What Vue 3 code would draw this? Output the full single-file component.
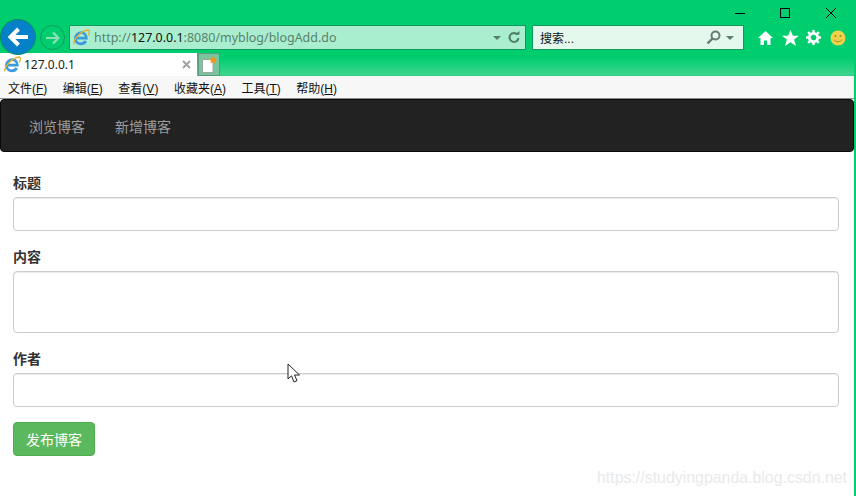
<script setup>
const menus = [
  { name: '文件', key: 'F' },
  { name: '编辑', key: 'E' },
  { name: '查看', key: 'V' },
  { name: '收藏夹', key: 'A' },
  { name: '工具', key: 'T' },
  { name: '帮助', key: 'H' }
]
const links = ['浏览博客', '新增博客']
</script>

<template>
  <div class="window">
    <header class="chrome">
      <div class="caption">
        <svg class="cap" width="45" height="12" viewBox="0 0 45 12"><path d="M0 6.500h10" stroke="#000" fill="none"/></svg>
        <svg class="cap" width="45" height="12" viewBox="0 0 45 12"><rect x="0.5" y="1.5" width="9" height="9" stroke="#000" fill="none"/></svg>
        <svg class="cap last" width="12" height="12" viewBox="0 0 12 12"><path d="M1 1l10 10M11 1L1 11" stroke="#000" fill="none"/></svg>
      </div>
      <div class="toolbar">
        <div class="back">
          <svg width="24" height="24" viewBox="0 0 24 24"><path d="M22 12H5M12.500 4l-8 8 8 8" stroke="#fff" stroke-width="4" fill="none"/></svg>
        </div>
        <div class="forward">
          <svg width="16" height="16" viewBox="0 0 16 16"><path d="M1 8h12M8 2.500l5.500 5.500L8 13.500" stroke="#8fdfb8" stroke-width="2.200" fill="none"/></svg>
        </div>
        <div class="address">
          <svg class="ie" width="17" height="17" viewBox="0 0 17 17">
            <path d="M2.500 9.200h10.800c0-3.300-2.200-5.500-5-5.500S2.500 6 2.500 9.500s2.500 5.300 5.500 5.300c2.200 0 3.800-1 4.700-2.800" fill="none" stroke="#3b9bdc" stroke-width="2.800"/>
            <path d="M1 15.500C-.5 11.500 8 1.500 15.500 1c1.500 1 .8 3.500-.3 5.500" fill="none" stroke="#e6b02e" stroke-width="1.300"/>
          </svg>
          <span class="url"><span class="dim">http://</span>127.0.0.1<span class="dim">:8080/myblog/blogAdd.do</span></span>
          <i class="caret"></i>
          <svg class="refresh" width="13" height="13" viewBox="0 0 13 13"><path d="M10.500 3.500a4.500 4.500 0 1 0 1 3.500" fill="none" stroke="#4f7f68" stroke-width="2"/><path d="M7.500 3.800h5V0z" fill="#4f7f68"/></svg>
        </div>
        <div class="search">
          <span class="search-text">搜索...</span>
          <svg width="15" height="15" viewBox="0 0 15 15"><circle cx="9.500" cy="5.500" r="4" fill="none" stroke="#6b7a72" stroke-width="2"/><path d="M6.500 8.500L1.500 13.500" stroke="#6b7a72" stroke-width="2.400"/></svg>
          <i class="caret small"></i>
        </div>
        <div class="tools">
          <svg width="17" height="16" viewBox="0 0 17 16"><path d="M8.500 1L1 8h2.500v7h3.500v-4.500h3V15h3.500V8H16z" fill="#fff"/></svg>
          <svg width="17" height="16" viewBox="0 0 18 17"><path d="M9 0l2.500 6H18l-5.200 4 2 7L9 13l-5.800 4 2-7L0 6h6.500z" fill="#fff"/></svg>
          <svg width="15" height="15" viewBox="0 0 16 16"><circle cx="8" cy="8" r="4.500" fill="none" stroke="#fff" stroke-width="3"/><path d="M8 0v3M8 13v3M0 8h3M13 8h3M2.300 2.300l2.200 2.200M11.500 11.500l2.200 2.200M13.700 2.300l-2.200 2.200M4.500 11.500l-2.200 2.200" stroke="#fff" stroke-width="2.600"/></svg>
          <svg class="smile" width="16" height="16" viewBox="0 0 16 16"><circle cx="8" cy="8" r="7.500" fill="#f2d24b"/><circle cx="5.500" cy="6" r="1" fill="#a98a1d"/><circle cx="10.500" cy="6" r="1" fill="#a98a1d"/><path d="M4 9.500c1 3 7 3 8 0" fill="none" stroke="#a98a1d"/></svg>
        </div>
      </div>
      <div class="tabs">
        <div class="tab">
          <svg width="17" height="17" viewBox="0 0 17 17">
            <path d="M2.500 9.200h10.800c0-3.300-2.200-5.500-5-5.500S2.500 6 2.500 9.500s2.500 5.300 5.500 5.300c2.200 0 3.800-1 4.700-2.800" fill="none" stroke="#3b9bdc" stroke-width="2.800"/>
            <path d="M1 15.500C-.5 11.500 8 1.500 15.500 1c1.500 1 .8 3.500-.3 5.500" fill="none" stroke="#e6b02e" stroke-width="1.300"/>
          </svg>
          <span class="tab-title">127.0.0.1</span>
          <svg width="9" height="9" viewBox="0 0 9 9"><path d="M1 1l7 7M8 1L1 8" stroke="#a3a3a3" stroke-width="2"/></svg>
        </div>
        <div class="new-tab">
          <svg width="16" height="18" viewBox="0 0 16 18"><path d="M1.500 3.500h9l1.500 1.500v11.500H1.500z" fill="#fff" stroke="#9aa8a0"/><path d="M12 0l1.300 2.200 2.700.8-2 1.800.4 2.700-2.400-1.300-2.400 1.300.4-2.700-2-1.800 2.700-.8z" fill="#f29a1e"/></svg>
        </div>
      </div>
    </header>

    <nav class="menubar">
      <span v-for="m in menus" :key="m.key" class="menu">{{ m.name }}(<u>{{ m.key }}</u>)</span>
    </nav>

    <main class="page">
      <div class="navbar">
        <a v-for="l in links" :key="l" class="nav-link">{{ l }}</a>
      </div>
      <form class="form">
        <div class="group">
          <label>标题</label>
          <input class="control" type="text" />
        </div>
        <div class="group">
          <label>内容</label>
          <textarea class="control area"></textarea>
        </div>
        <div class="group tail">
          <label>作者</label>
          <input class="control" type="text" />
        </div>
        <button class="submit" type="button">发布博客</button>
      </form>
    </main>

    <svg class="cursor" width="14" height="21" viewBox="0 0 14 21"><path d="M1 1v15l3.500-3.200L7 19l3-1.300-2.500-5.700H12.500z" fill="#fff" stroke="#222" stroke-width="1"/></svg>
    <span class="watermark">https://studyingpanda.blog.csdn.net</span>
  </div>
</template>

<style>
html, body { margin: 0; background: #fff; }
</style>

<style scoped>
.window {
  position: relative;
  width: 856px;
  height: 496px;
  box-sizing: border-box;
  border-right: 2px solid #00ce6e;
  background: #fff;
  overflow: hidden;
  font-family: "Liberation Sans", "Noto Sans CJK SC", sans-serif;
  display: flex;
  flex-direction: column;
}
.chrome {
  height: 76px;
  flex: none;
  background: linear-gradient(#00ce6e 0, #00ce6e 58px, #3fd58f 75px, #1bc97a 76px);
  box-sizing: border-box;
}
.caption {
  height: 25px;
  display: flex;
  justify-content: flex-end;
  align-items: flex-start;
  padding: 7px 17px 0 0;
  box-sizing: border-box;
}
.cap { display: block; }
.toolbar {
  height: 25px;
  display: flex;
  align-items: center;
}
.back {
  width: 36px;
  height: 36px;
  box-sizing: border-box;
  border: 1px solid #0a8a5e;
  border-radius: 50%;
  background: #0581c9;
  display: flex;
  align-items: center;
  justify-content: center;
  flex: none;
  position: relative;
  z-index: 1;
  margin-top: -1px;
}
.forward {
  width: 25px;
  height: 25px;
  box-sizing: border-box;
  border: 1px solid #0f9a5e;
  border-radius: 50%;
  margin-left: 4px;
  display: flex;
  align-items: center;
  justify-content: center;
  flex: none;
}
.address {
  width: 457px;
  height: 25px;
  box-sizing: border-box;
  margin-left: 4px;
  border: 1px solid #0f9a5e;
  background: #a9efcf;
  display: flex;
  align-items: center;
  padding: 0 5px 0 3px;
  flex: none;
}
.ie { flex: none; }
.url {
  margin-left: 4px;
  font-family: "Noto Sans", sans-serif;
  font-size: 12.450px;
  color: #111;
  flex: 1;
  white-space: nowrap;
}
.dim { color: #5b7f6d; }
.caret {
  width: 0;
  height: 0;
  border: 4px solid transparent;
  border-top: 4px solid #5b7f6d;
  border-bottom: 0;
  margin-right: 6px;
}
.refresh { flex: none; }
.search {
  width: 212px;
  height: 25px;
  box-sizing: border-box;
  margin-left: 6px;
  border: 1px solid #0f9a5e;
  background: #e4f8ee;
  display: flex;
  align-items: center;
  padding: 0 9px 0 7px;
  flex: none;
}
.search-text {
  flex: 1;
  font-size: 12px;
  color: #111;
}
.caret.small { margin: 0 0 0 5px; }
.tools {
  display: flex;
  align-items: center;
  gap: 7.500px;
  margin-left: 13px;
}
.smile { margin-left: 1px; }
.tabs {
  height: 26px;
  display: flex;
  align-items: flex-end;
}
.tab {
  width: 197px;
  height: 23px;
  background: #fff;
  box-sizing: border-box;
  display: flex;
  align-items: center;
  padding: 0 6px 0 4px;
}
.tab-title {
  flex: 1;
  margin-left: 3px;
  font-family: "Noto Sans", sans-serif;
  font-size: 12px;
  color: #222;
}
.new-tab {
  width: 22px;
  height: 23px;
  box-sizing: border-box;
  margin-left: 1px;
  border: 1px solid #5b9a7c;
  background: #79c49d;
  display: flex;
  align-items: center;
  justify-content: center;
}
.menubar {
  height: 23px;
  flex: none;
  box-sizing: border-box;
  background: #f7f7f7;
  border-bottom: 1px solid #8c8c8c;
  display: flex;
  align-items: center;
  padding-left: 8px;
  gap: 15.500px;
  font-size: 12px;
  color: #111;
}
.page { flex: 1; }
.navbar {
  height: 53px;
  box-sizing: border-box;
  background: #222;
  border: 1px solid #080808;
  border-radius: 4px;
  display: flex;
  align-items: center;
  padding-left: 28px;
  gap: 30px;
}
.nav-link {
  font-size: 14px;
  color: #9d9d9d;
}
.form {
  padding: 21px 15px 0 13px;
  display: flex;
  flex-direction: column;
}
.group {
  display: flex;
  flex-direction: column;
  margin-bottom: 16px;
}
.group.tail { margin-bottom: 15px; }
.group label {
  font-size: 14px;
  line-height: 20px;
  font-weight: 700;
  color: #333;
  margin-bottom: 4px;
}
.control {
  display: block;
  width: 100%;
  height: 34px;
  box-sizing: border-box;
  border: 1px solid #ccc;
  border-radius: 4px;
  background: #fff;
  box-shadow: inset 0 1px 1px rgba(0, 0, 0, .075);
  outline: none;
  margin: 0;
  resize: none;
}
.area { height: 62px; }
.submit {
  width: 82px;
  height: 34px;
  box-sizing: border-box;
  border: 1px solid #4cae4c;
  border-radius: 4px;
  background: #5cb85c;
  color: #fff;
  font-family: inherit;
  font-size: 14px;
  padding: 0;
}
.cursor {
  position: absolute;
  left: 287px;
  top: 363px;
}
.watermark {
  position: absolute;
  left: 597px;
  top: 469px;
  font-size: 15.900px;
  line-height: 18px;
  color: #e9e9e9;
  white-space: nowrap;
}
</style>
